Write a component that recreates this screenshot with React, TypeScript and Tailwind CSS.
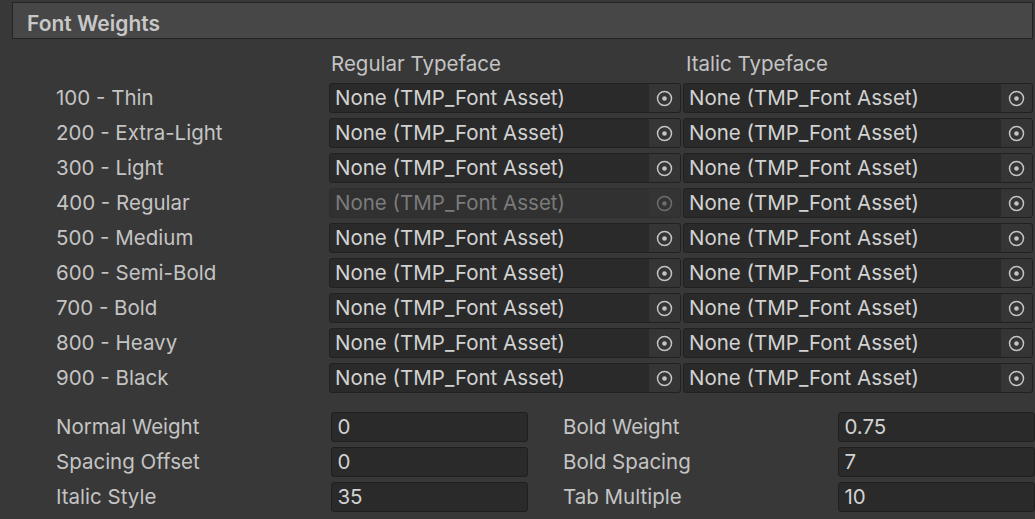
import React from "react";

const rows = [
  "100 - Thin",
  "200 - Extra-Light",
  "300 - Light",
  "400 - Regular",
  "500 - Medium",
  "600 - Semi-Bold",
  "700 - Bold",
  "800 - Heavy",
  "900 - Black",
];

function Target({ disabled }: { disabled?: boolean }) {
  const c = disabled ? "#6e6e6e" : "#c4c4c4";
  return (
    <svg width="17" height="17" viewBox="0 0 17 17">
      <circle cx="8.5" cy="8.5" r="7" fill="none" stroke={c} strokeWidth="1.5" />
      <circle cx="8.5" cy="8.5" r="2.3" fill={c} />
    </svg>
  );
}

function ObjField({ disabled, width }: { disabled?: boolean; width: string }) {
  return (
    <div
      className={`${width} h-[30px] flex rounded-[3px] border ${
        disabled ? "border-[#2e2e2e] bg-[#313131]" : "border-[#212121] bg-[#2a2a2a]"
      } overflow-hidden`}
    >
      <div
        className={`flex-1 flex items-center pl-[5px] whitespace-nowrap ${
          disabled ? "text-[#7b7b7b]" : "text-[#d2d2d2]"
        }`}
      >
        None (TMP_Font Asset)
      </div>
      <div
        className={`w-[31px] flex items-center justify-center ${
          disabled ? "bg-[#343434]" : "bg-[#353535]"
        }`}
      >
        <Target disabled={disabled} />
      </div>
    </div>
  );
}

function NumField({ value, width }: { value: string; width: string }) {
  return (
    <div
      className={`${width} h-[30px] flex items-center pl-[5px] rounded-[3px] border border-[#1f1f1f] bg-[#2a2a2a] text-[#d2d2d2]`}
    >
      {value}
    </div>
  );
}

export default function App() {
  return (
    <div
      className="w-[1035px] h-[519px] overflow-hidden bg-[#383838] pt-[2px] text-[20.5px] text-[#c4c4c4]"
      style={{ fontFamily: "Inter, 'Noto Sans', sans-serif" }}
    >
      <div className="ml-[12px] mr-[2px] h-[37px] border border-[#232323] bg-[#474747] pl-[14px] pt-[6px] flex items-center font-semibold text-[21px] text-[#c8c8c8]">
        Font Weights
      </div>
      <div className="flex h-[44px] items-center pt-[6px]">
        <div className="w-[331px]" />
        <div className="w-[355px]">Regular Typeface</div>
        <div>Italic Typeface</div>
      </div>
      <div className="flex flex-col gap-[5px]">
        {rows.map((r, i) => (
          <div key={r} className="flex items-center h-[30px]">
            <div className="w-[329px] pl-[56px] whitespace-nowrap">{r}</div>
            <ObjField width="w-[352px]" disabled={i === 3} />
            <div className="w-[2px]" />
            <ObjField width="w-[350px]" />
          </div>
        ))}
      </div>
      <div className="mt-[19px] flex flex-col gap-[5px]">
        {[
          ["Normal Weight", "0", "Bold Weight", "0.75"],
          ["Spacing Offset", "0", "Bold Spacing", "7"],
          ["Italic Style", "35", "Tab Multiple", "10"],
        ].map(([a, av, b, bv]) => (
          <div key={a} className="flex items-center h-[30px]">
            <div className="w-[332px] pl-[56px] whitespace-nowrap">{a}</div>
            <NumField value={av} width="w-[197px]" />
            <div className="w-[311px] pl-[35px] whitespace-nowrap">{b}</div>
            <NumField value={bv} width="w-[197px]" />
          </div>
        ))}
      </div>
    </div>
  );
}
